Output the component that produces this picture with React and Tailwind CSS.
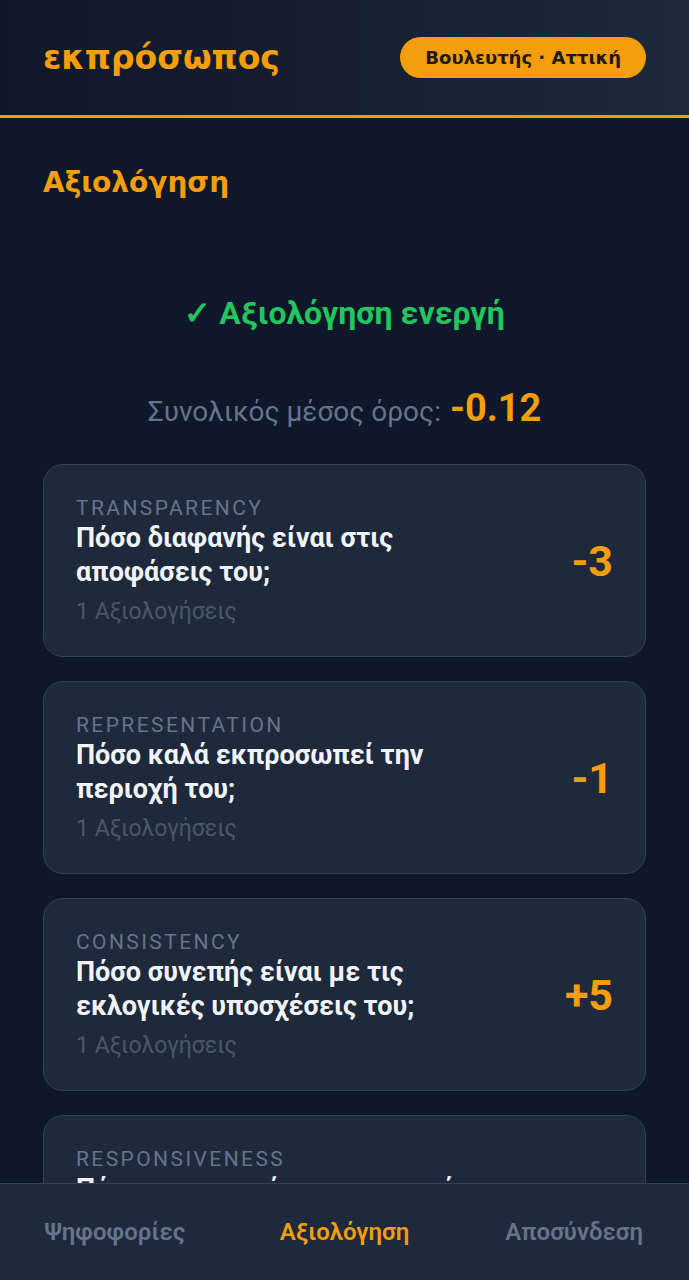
import React from 'react';

const ratings = [
  { key: 'TRANSPARENCY', question: 'Πόσο διαφανής είναι στις αποφάσεις του;', count: 1, score: '-3' },
  { key: 'REPRESENTATION', question: 'Πόσο καλά εκπροσωπεί την περιοχή του;', count: 1, score: '-1' },
  { key: 'CONSISTENCY', question: 'Πόσο συνεπής είναι με τις εκλογικές υποσχέσεις του;', count: 1, score: '+5' },
  { key: 'RESPONSIVENESS', question: 'Πόσο ανταποκρίνεται στις ανάγκες των πολιτών;', count: 1, score: '+2' },
];

const RatingCard = ({ item }) => (
  <div className="flex items-center justify-between rounded-[20px] border border-[#334155] bg-[#1e293b] px-8 pt-[30px] pb-[29px]">
    <div className="max-w-[440px]">
      <div className="text-[21px] leading-[26px] tracking-[0.115em] text-[#64748b]">{item.key}</div>
      <div className="text-[27px] font-bold leading-[34px] text-[#f1f5f9]">{item.question}</div>
      <div className="mt-[8px] text-[23px] leading-[30px] text-[#4b5768]">{item.count} Αξιολογήσεις</div>
    </div>
    <div className="text-[43px] font-bold leading-none text-[#f59e0b]">{item.score}</div>
  </div>
);

export default function App() {
  return (
    <div className="min-h-screen bg-[#0f172a] font-['Roboto',sans-serif] pb-[120px]">
      {/* header */}
      <header className="flex h-[118px] items-center justify-between border-b-[3px] border-[#f59e0b] bg-gradient-to-r from-[#0f172a] to-[#1e293b] px-[43px]">
        <h1 className="font-['DejaVu_Sans',sans-serif] text-[33px] font-bold text-[#f59e0b]">εκπρόσωπος</h1>
        <span className="rounded-full bg-[#f59e0b] px-[25px] py-[8px] font-['DejaVu_Sans',sans-serif] text-[18px] font-semibold leading-[25px] text-[#1f1a0e]">
          Βουλευτής · Αττική
        </span>
      </header>

      <main className="px-[43px]">
        <h2 className="mt-[45px] font-['DejaVu_Sans',sans-serif] text-[28px] font-bold leading-[40px] text-[#f59e0b]">Αξιολόγηση</h2>

        <p className="mt-[90px] text-center text-[32px] font-bold leading-[40px] text-[#22c55e]">✓ Αξιολόγηση ενεργή</p>

        <div className="mt-[53px] flex h-[44px] items-baseline justify-center gap-[9px]">
          <span className="text-[28px] leading-[44px] text-[#64748b]">Συνολικός μέσος όρος:</span>
          <span className="text-[38px] font-bold leading-[44px] text-[#f59e0b]">-0.12</span>
        </div>

        <div className="mt-[34px] flex flex-col gap-[24px]">
          {ratings.map((item) => (
            <RatingCard key={item.key} item={item} />
          ))}
        </div>
      </main>

      {/* bottom nav */}
      <nav className="fixed bottom-0 left-0 right-0 grid h-[97px] grid-cols-3 items-center border-t border-[#334155] bg-[#1e293b] text-center text-[24px] font-semibold">
        <span className="text-[#64748b]">Ψηφοφορίες</span>
        <span className="text-[#f59e0b]">Αξιολόγηση</span>
        <span className="text-[#64748b]">Αποσύνδεση</span>
      </nav>
    </div>
  );
}
